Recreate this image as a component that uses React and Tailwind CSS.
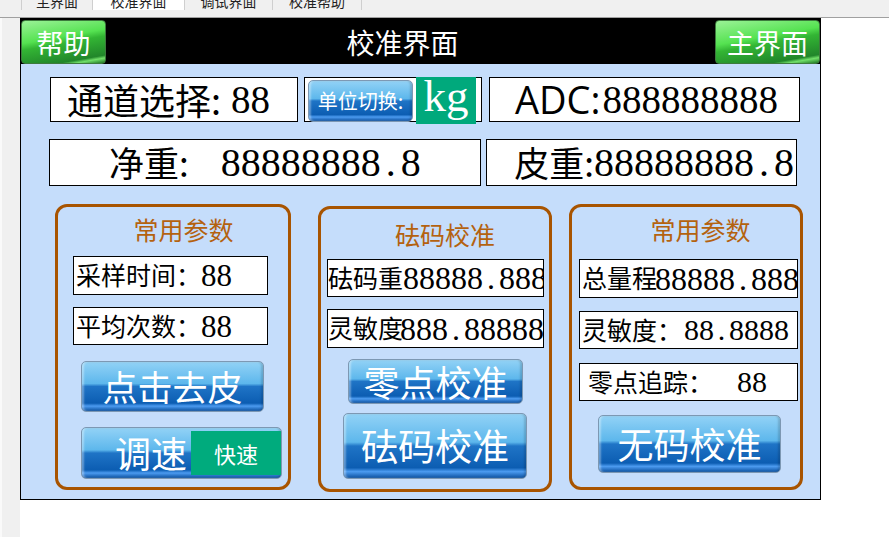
import React from 'react';

const CJK = "font-['Noto_Sans_CJK_SC','Microsoft_YaHei',sans-serif]";
const SERIF = "font-['Liberation_Serif','Times_New_Roman',serif]";
const BLUE =
  "bg-[linear-gradient(180deg,#92d2f6_0%,#5db7ec_44%,#1f74c6_50%,#0c5db2_84%,#4c9bf0_90%,#0a50a0_100%)] border border-[#7d98b3] rounded-[5px] shadow-[inset_2px_0_2px_rgba(255,255,255,0.35),inset_-2px_0_2px_rgba(0,0,0,0.15)]";
const GREEN =
  "bg-[linear-gradient(170deg,#9af296_0%,#55e251_40%,#33b534_52%,#21862a_86%,#72e06a_91%,#1c7420_100%)] border border-[#3d7a3d] rounded-[4px]";

const TABS = [
  { label: '主界面', w: 'w-[71px]' },
  { label: '校准界面', w: 'w-[92px]', active: true },
  { label: '调试界面', w: 'w-[88px]' },
  { label: '校准帮助', w: 'w-[89px]' },
];

function Num({ v, className = '' }) {
  return (
    <span className={`${SERIF} ${className}`}>
      {v.split('').map((c, i) =>
        c === '.' ? (
          <span key={i} className="inline-block w-[0.5em] text-center">.</span>
        ) : (
          <span key={i}>{c}</span>
        )
      )}
    </span>
  );
}

function Field({ className = '', children }) {
  return (
    <div className={`bg-white border border-black flex items-center overflow-hidden whitespace-nowrap leading-none ${className}`}>
      {children}
    </div>
  );
}

function BlueButton({ className = '', text, size = 'text-[36px]' }) {
  return (
    <div className={`${BLUE} ${className} flex items-center justify-center text-white leading-none ${size}`}>
      <span className="-mt-[2px]">{text}</span>
    </div>
  );
}

function Panel({ className = '', title, titleClass = '', children }) {
  return (
    <div className={`border-[3px] border-[#a85400] rounded-[12px] h-[286px] w-[234px] flex flex-col items-start ${className}`}>
      <div className={`w-full text-center text-[25px] leading-none text-[#b4620f] ${titleClass}`}>{title}</div>
      {children}
    </div>
  );
}

export default function App() {
  return (
    <div className={`w-[889px] h-[537px] bg-white overflow-hidden ${CJK}`}>
      {/* tab strip */}
      <div className="h-[18px] bg-[#f0f0f0] border-b border-[#a0a0a0] flex items-start">
        <div className="w-[22px] h-[10px] border-r border-[#cfcfcf]" />
        {TABS.map((t) => (
          <div
            key={t.label}
            className={`${t.w} h-[10px] overflow-hidden border-r border-[#cfcfcf] text-center text-[14px] leading-[14px] text-[#222] ${t.active ? 'bg-white' : ''}`}
          >
            <div className="-mt-[6px]">{t.label}</div>
          </div>
        ))}
      </div>

      <div className="flex h-[519px]">
        <div className="w-[20px] bg-[#f0f0f0] border-l-[2px] border-[#fafafa]" />

        <div className="w-[801px] h-[482px] border border-black bg-[#c5ddfb] flex flex-col">
          {/* header */}
          <div className="h-[45px] bg-black flex items-end">
            <div className={`${GREEN} w-[85px] h-[44px] flex items-center justify-center text-white text-[27px] leading-none`}>
              帮助
            </div>
            <div className="flex-1 text-center text-white text-[28px] leading-none pr-[16px] self-center">校准界面</div>
            <div className={`${GREEN} w-[105px] h-[44px] flex items-center justify-center text-white text-[27px] leading-none`}>
              主界面
            </div>
          </div>

          {/* row 1 */}
          <div className="flex items-start mt-[13px]">
            <Field className="ml-[29px] w-[248px] h-[45px] pl-[16px]">
              <span className="text-[36px] -mt-[2px]">通道选择:</span>
              <Num v="88" className="text-[39px] ml-[10px]" />
            </Field>
            <div className="ml-[6px] w-[178px] h-[45px] border border-black bg-white flex items-start">
              <div className={`${BLUE} ml-[3px] mt-[2px] w-[105px] h-[42px] flex items-center justify-center text-white text-[20px] leading-none`}>
                单位切换:
              </div>
              <div className={`ml-[3px] -mt-[1px] w-[60px] h-[47px] bg-[#00a97c] text-white text-[45px] leading-none flex items-center justify-center ${SERIF}`}>
                <span className="-mt-[8px]">kg</span>
              </div>
            </div>
            <Field className="ml-[7px] w-[311px] h-[45px] pl-[25px]">
              <span className="font-['Open_Sans',sans-serif] text-[38px] -mt-[2px]">ADC:</span>
              <Num v="888888888" className="text-[39px] ml-[2px]" />
            </Field>
          </div>

          {/* row 2 */}
          <div className="flex items-start mt-[17px]">
            <Field className="ml-[28px] w-[432px] h-[47px] pl-[59px]">
              <span className="text-[35px] -mt-[2px]">净重:</span>
              <Num v="  88888888.8" className="text-[40px] whitespace-pre ml-[12px]" />
            </Field>
            <Field className="ml-[5px] w-[311px] h-[47px] justify-end pr-[2px]">
              <span className="text-[35px] -mt-[2px]">皮重:</span>
              <Num v="88888888.8" className="text-[40px]" />
            </Field>
          </div>

          {/* panels */}
          <div className="flex items-start mt-[18px]">
            <Panel className="ml-[34px] w-[236px]" title="常用参数" titleClass="mt-[10px] pl-[21px]">
              <Field className="mt-[14px] ml-[15px] w-[195px] h-[39px] pl-[2px]">
                <span className="text-[25px] -mt-[2px]">采样时间：</span>
                <Num v="88" className="text-[31px]" />
              </Field>
              <Field className="mt-[12px] ml-[15px] w-[195px] h-[38px] pl-[2px]">
                <span className="text-[25px] -mt-[2px]">平均次数：</span>
                <Num v="88" className="text-[31px]" />
              </Field>
              <BlueButton className="mt-[16px] ml-[23px] w-[183px] h-[51px]" text="点击去皮" size="text-[35px]" />
              <div className={`${BLUE} mt-[15px] ml-[23px] w-[201px] h-[52px] flex items-stretch overflow-hidden text-white leading-none`}>
                <div className="w-[109px] flex items-center justify-end pr-[4px] text-[36px]">
                  <span className="-mt-[2px]">调速</span>
                </div>
                <div className="flex-1 bg-[#00ab7d] my-[3px] flex items-center justify-center text-[22px]">快速</div>
              </div>
            </Panel>

            <Panel className="ml-[27px] mt-[2px]" title="砝码校准" titleClass="mt-[13px] pl-[20px]">
              <Field className="mt-[12px] ml-[6px] w-[217px] h-[38px]">
                <span className="text-[25px] -mt-[2px]">砝码重</span>
                <Num v="88888.888" className="text-[32px]" />
              </Field>
              <Field className="mt-[12px] ml-[6px] w-[217px] h-[39px]">
                <span className="text-[25px] -mt-[2px]">灵敏度</span>
                <Num v="888.88888" className="text-[32px] -ml-[3px]" />
              </Field>
              <BlueButton className="mt-[11px] ml-[27px] w-[175px] h-[45px]" text="零点校准" />
              <BlueButton className="mt-[9px] ml-[22px] w-[184px] h-[66px]" text="砝码校准" size="text-[37px]" />
            </Panel>

            <Panel className="ml-[17px]" title="常用参数" titleClass="mt-[10px] pl-[29px]">
              <Field className="mt-[17px] ml-[7px] w-[219px] h-[39px] pl-[2px]">
                <span className="text-[25px] -mt-[2px]">总量程</span>
                <Num v="88888.888" className="text-[32px] -ml-[2px]" />
              </Field>
              <Field className="mt-[13px] ml-[7px] w-[219px] h-[38px] pl-[2px]">
                <span className="text-[25px] -mt-[2px]">灵敏度：</span>
                <Num v="88.8888" className="text-[30px] ml-[2px]" />
              </Field>
              <Field className="mt-[14px] ml-[7px] w-[219px] h-[38px] pl-[8px]">
                <span className="text-[25px] -mt-[2px]">零点追踪：</span>
                <Num v="88" className="text-[30px] ml-[24px]" />
              </Field>
              <BlueButton className="mt-[14px] ml-[26px] w-[183px] h-[58px]" text="无码校准" />
            </Panel>
          </div>
        </div>

        <div className="flex-1 bg-white" />
      </div>
    </div>
  );
}
